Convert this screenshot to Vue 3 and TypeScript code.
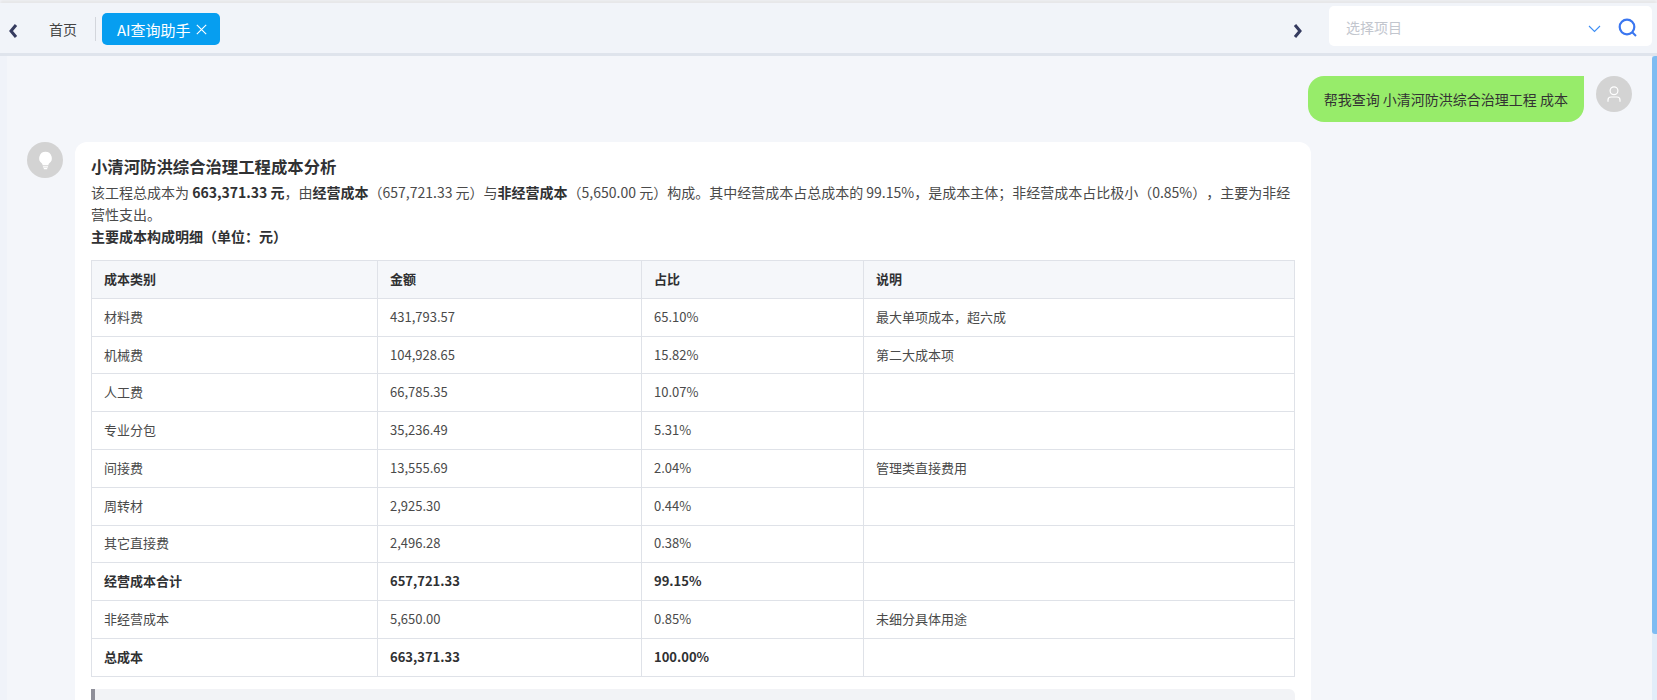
<script setup lang="ts">
interface Row { name: string; amount: string; pct: string; note: string; bold?: boolean }
const rows: Row[] = [
  { name: '材料费', amount: '431,793.57', pct: '65.10%', note: '最大单项成本，超六成' },
  { name: '机械费', amount: '104,928.65', pct: '15.82%', note: '第二大成本项' },
  { name: '人工费', amount: '66,785.35', pct: '10.07%', note: '' },
  { name: '专业分包', amount: '35,236.49', pct: '5.31%', note: '' },
  { name: '间接费', amount: '13,555.69', pct: '2.04%', note: '管理类直接费用' },
  { name: '周转材', amount: '2,925.30', pct: '0.44%', note: '' },
  { name: '其它直接费', amount: '2,496.28', pct: '0.38%', note: '' },
  { name: '经营成本合计', amount: '657,721.33', pct: '99.15%', note: '', bold: true },
  { name: '非经营成本', amount: '5,650.00', pct: '0.85%', note: '未细分具体用途' },
  { name: '总成本', amount: '663,371.33', pct: '100.00%', note: '', bold: true },
]
</script>

<template>
  <div class="app">
    <header class="topbar">
      <div class="tabs">
        <svg class="arrow" width="10" height="16" viewBox="0 0 10 16"><path d="M8 2 3 8l5 6" fill="none" stroke="#353b5f" stroke-width="3"/></svg>
        <span class="tab">首页</span>
        <span class="divider"></span>
        <span class="tab-active">AI查询助手
          <svg width="11" height="11" viewBox="0 0 11 11"><path d="M.8.8l9.4 9.4M10.2.8.8 10.2" stroke="#fff" stroke-width="1.100" fill="none"/></svg>
        </span>
      </div>
      <svg class="arrow" width="10" height="16" viewBox="0 0 10 16"><path d="M2 2l5 6-5 6" fill="none" stroke="#353b5f" stroke-width="3"/></svg>
      <div class="search">
        <span class="placeholder">选择项目</span>
        <svg class="chev" width="13" height="8" viewBox="0 0 13 8"><path d="M1 1l5.500 5.500L12 1" fill="none" stroke="#3d8ef5" stroke-width="1.100"/></svg>
        <svg class="mag" width="19" height="19" viewBox="0 0 19 19"><circle cx="9" cy="9" r="7.300" fill="none" stroke="#3a76f0" stroke-width="2.200"/><path d="M14.500 14.500l3.500 3.500" stroke="#3a76f0" stroke-width="2" fill="none"/></svg>
      </div>
    </header>

    <div class="body">
      <aside class="side"></aside>
      <main class="chat">
        <div class="user-row">
          <div class="bubble">帮我查询 小清河防洪综合治理工程 成本</div>
          <div class="avatar">
            <svg width="14" height="16" viewBox="0 0 14 16"><circle cx="7" cy="4.700" r="3.900" fill="none" stroke="#fff" stroke-width="1.200"/><path d="M1 15.800v-1.800a3 3 0 0 1 3-3h6a3 3 0 0 1 3 3v1.800" fill="none" stroke="#fff" stroke-width="1.200"/></svg>
          </div>
        </div>
        <div class="bot-row">
          <div class="avatar">
            <svg width="15" height="19" viewBox="1 0 16 22"><path d="M9 1a7.400 7.400 0 0 0-4.400 13.300c.7.6 1 1.300 1 2.200h6.800c0-.9.3-1.600 1-2.200A7.400 7.400 0 0 0 9 1z" fill="#fff"/><path d="M6 18.300h6M7 20.400h4" stroke="#fff" stroke-width="1.400"/></svg>
          </div>
          <div class="card">
            <h3 class="title">小清河防洪综合治理工程成本分析</h3>
            <p class="para">该工程总成本为 <strong>663,371.33 元</strong>，由<strong>经营成本</strong>（657,721.33 元）与<strong>非经营成本</strong>（5,650.00 元）构成。其中经营成本占总成本的 99.15%，是成本主体；非经营成本占比极小（0.85%），主要为非经营性支出。</p>
            <p class="para"><strong>主要成本构成明细（单位：元）</strong></p>
            <table class="table">
              <colgroup><col class="c1"><col class="c2"><col class="c3"><col></colgroup>
              <thead><tr><th>成本类别</th><th>金额</th><th>占比</th><th>说明</th></tr></thead>
              <tbody>
                <tr v-for="r in rows" :key="r.name" :class="{ bold: r.bold }">
                  <td>{{ r.name }}</td><td>{{ r.amount }}</td><td>{{ r.pct }}</td><td>{{ r.note }}</td>
                </tr>
              </tbody>
            </table>
            <div class="quote"></div>
          </div>
        </div>
      </main>
      <div class="scrollbar"><div class="thumb"></div></div>
    </div>
  </div>
</template>

<style>
html, body { margin: 0; overflow: hidden; }
</style>

<style scoped>
.app { width: 1657px; height: 700px; overflow: hidden; display: flex; flex-direction: column; font-family: "Noto Sans CJK SC", "Noto Sans", sans-serif; background: #f4f6fa; color: #303133; }
.topbar { height: 53px; margin-top: 3px; box-sizing: border-box; flex: none; display: flex; align-items: center; background: #f1f4f9; border-bottom: 3px solid #dfe4ec; box-shadow: 0 -3px 3px #e6e6e8; padding: 0 5px 0 8px; }
.tabs { flex: 1; display: flex; align-items: center; margin-top: 2px; }
.tabs .arrow { margin-top: 3px; }
.arrow { margin-top: 5px; }
.tab { font-size: 14px; margin-left: 31px; color: #444; }
.divider { width: 1px; height: 24px; background: #d3d6dc; margin: 0 5px 0 18px; }
.tab-active { height: 32px; width: 118px; margin-left: 1px; box-sizing: border-box; display: flex; align-items: center; gap: 5px; padding-left: 15px; background: #069ef0; color: #fff; border-radius: 5px; font-size: 15px; }
.search { width: 323px; height: 40px; margin: -4px 0 0 26px; box-sizing: border-box; background: #fff; border-radius: 5px; display: flex; align-items: center; padding: 0 15px 0 17px; }
.placeholder { flex: 1; font-size: 14px; color: #c2c6ce; margin-top: 2px; }
.chev { margin-right: 17px; margin-top: 5px; }
.mag { margin-top: 2px; }
.body { flex: 1; display: flex; min-height: 0; }
.side { width: 7px; flex: none; background: #f0f3f9; }
.chat { flex: 1; min-width: 0; padding: 20px 20px 0 20px; }
.user-row { display: flex; justify-content: flex-end; gap: 12px; align-items: flex-start; }
.bubble { height: 46px; box-sizing: border-box; padding: 0 16px; display: flex; align-items: center; background: #97ec6a; border-radius: 16px 0 16px 16px; font-size: 14px; color: #333; }
.avatar { width: 36px; height: 36px; flex: none; border-radius: 50%; background: #d3d3d3; display: flex; align-items: center; justify-content: center; }
.bot-row { display: flex; gap: 12px; margin-top: 20px; align-items: flex-start; }
.card { width: 1236px; box-sizing: border-box; background: #fff; border-radius: 12px; padding: 12px 16px 0; }
.title { margin: 0 0 2.500px; font-size: 16.380px; font-weight: 700; line-height: 24px; color: #303133; }
.para { margin: 0; font-size: 14px; line-height: 22.400px; color: #4a4a4a; text-spacing-trim: space-all; }
.para strong { color: #303133; }
.table { width: 1204px; margin-top: 12.300px; border-collapse: collapse; table-layout: fixed; font-size: 13px; border: 1px solid #dfe2e8; }
.c1 { width: 286px; }
.c2 { width: 264px; }
.c3 { width: 222px; }
th, td { border: 1px solid #dfe2e8; padding: 0 12px 2px; height: 37.800px; box-sizing: border-box; text-align: left; color: #4a4a4a; font-weight: 400; }
th { background: #f5f7fa; font-weight: 700; color: #303133; }
.bold td { font-weight: 700; color: #303133; }
.quote { height: 40px; margin-top: 12px; background: #f2f3f6; border-left: 4px solid #8f8f99; border-radius: 0 6px 6px 0; }
.scrollbar { width: 5px; flex: none; background: #e2edf9; }
.thumb { height: 578px; background: #7ebcf2; border-radius: 3px 0 0 3px; }
</style>
